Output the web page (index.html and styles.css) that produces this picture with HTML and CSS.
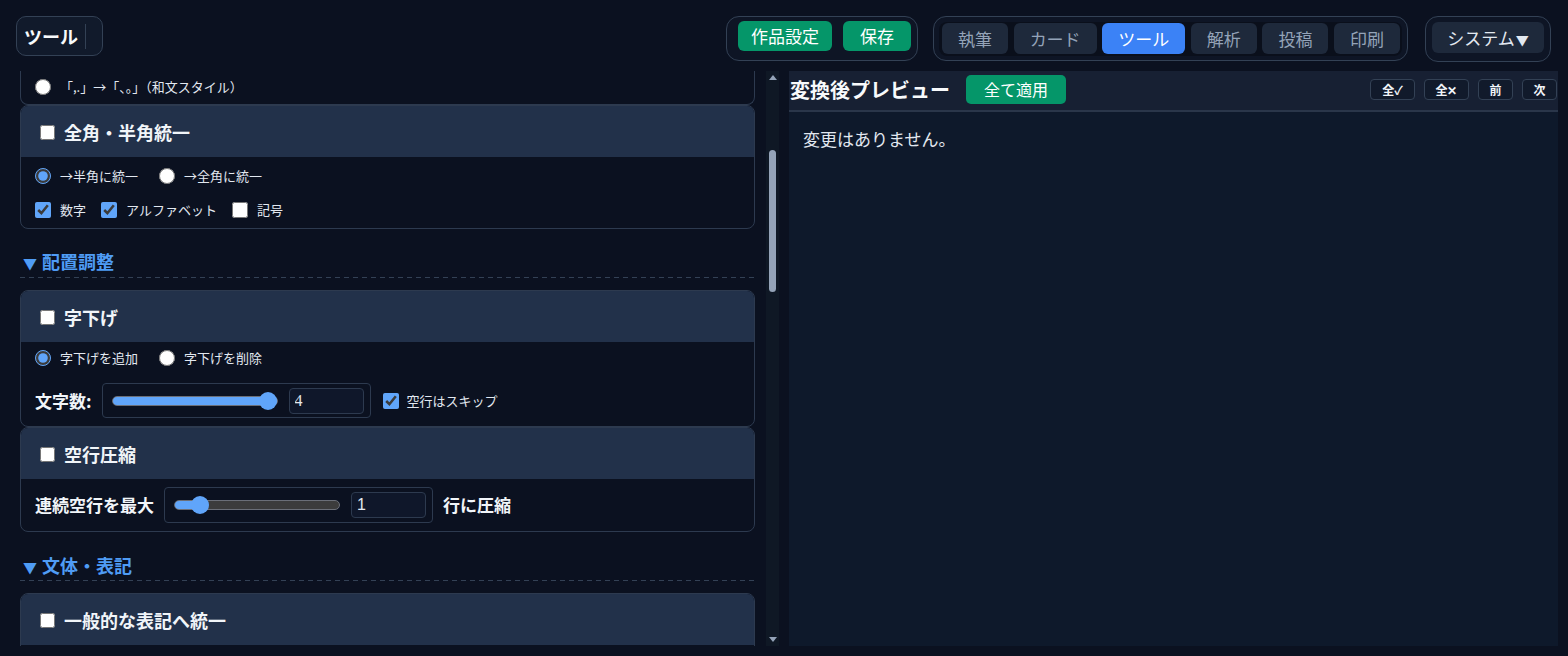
FILE: index.html
```html
<!DOCTYPE html>
<html lang="ja">
<head>
<meta charset="utf-8">
<title>ツール</title>
<link rel="stylesheet" href="styles.css">
</head>
<body>
<div class="app">
  <header class="topbar">
    <div class="title-box"><span class="title">ツール</span><span class="sep"></span></div>
    <div class="spacer"></div>
    <div class="group g-actions">
      <button class="btn green">作品設定</button>
      <button class="btn green save">保存</button>
    </div>
    <div class="group g-tabs">
      <div class="tabs">
        <button class="tab">執筆</button>
        <button class="tab">カード</button>
        <button class="tab active">ツール</button>
        <button class="tab">解析</button>
        <button class="tab">投稿</button>
        <button class="tab">印刷</button>
      </div>
    </div>
    <div class="group g-sys">
      <button class="btn sys">システム<span class="caret">▼</span></button>
    </div>
  </header>

  <main class="main">
    <div class="left">
      <div class="card card-cut">
        <div class="card-body cut-body">
          <div class="row">
            <label class="opt"><input type="radio" name="punct" class="radio"><span>「,.」→「、。」（和文スタイル）</span></label>
          </div>
        </div>
      </div>

      <div class="card">
        <div class="card-head"><input type="checkbox" class="head-cb"><span class="card-title">全角・半角統一</span></div>
        <div class="card-body b-width">
          <div class="row radios">
            <label class="opt"><input type="radio" name="width" class="radio" checked><span>→半角に統一</span></label>
            <label class="opt"><input type="radio" name="width" class="radio"><span>→全角に統一</span></label>
          </div>
          <div class="row checks">
            <label class="opt"><input type="checkbox" class="cb" checked><span>数字</span></label>
            <label class="opt"><input type="checkbox" class="cb" checked><span>アルファベット</span></label>
            <label class="opt"><input type="checkbox" class="cb"><span>記号</span></label>
          </div>
        </div>
      </div>

      <h3 class="section s-first"><span class="tri">▼</span>配置調整</h3>

      <div class="card">
        <div class="card-head"><input type="checkbox" class="head-cb"><span class="card-title">字下げ</span></div>
        <div class="card-body b-indent">
          <div class="row radios">
            <label class="opt"><input type="radio" name="indent" class="radio" checked><span>字下げを追加</span></label>
            <label class="opt"><input type="radio" name="indent" class="radio"><span>字下げを削除</span></label>
          </div>
          <div class="row slider-row">
            <span class="field-label">文字数:</span>
            <div class="range-box">
              <input type="range" class="range" min="1" max="4" value="4" style="--fill:100%">
              <input type="text" class="num num-serif" value="4">
            </div>
            <label class="opt skip"><input type="checkbox" class="cb" checked><span>空行はスキップ</span></label>
          </div>
        </div>
      </div>

      <div class="card">
        <div class="card-head"><input type="checkbox" class="head-cb"><span class="card-title">空行圧縮</span></div>
        <div class="card-body b-blank">
          <div class="row slider-row">
            <span class="field-label">連続空行を最大</span>
            <div class="range-box tall">
              <input type="range" class="range" min="0" max="9" value="1" style="--fill:16%">
              <input type="text" class="num" value="1">
            </div>
            <span class="field-label">行に圧縮</span>
          </div>
        </div>
      </div>

      <h3 class="section s-second"><span class="tri">▼</span>文体・表記</h3>

      <div class="card">
        <div class="card-head"><input type="checkbox" class="head-cb"><span class="card-title">一般的な表記へ統一</span></div>
        <div class="card-body b-width">
          <div class="row"></div>
        </div>
      </div>
    </div>

    <div class="scrollbar">
      <span class="arrow up"></span>
      <div class="track"><div class="thumb"></div></div>
      <span class="arrow down"></span>
    </div>

    <section class="preview">
      <div class="preview-head">
        <span class="preview-title">変換後プレビュー</span>
        <button class="btn green apply">全て適用</button>
        <div class="spacer"></div>
        <div class="mini-group">
          <button class="mini wide">全✓</button>
          <button class="mini wide">全✕</button>
          <button class="mini">前</button>
          <button class="mini">次</button>
        </div>
      </div>
      <div class="preview-body">
        <p class="empty">変更はありません。</p>
      </div>
    </section>
  </main>
</div>
</body>
</html>
```

FILE: styles.css
```css
* { box-sizing: border-box; }

html, body {
  margin: 0;
  padding: 0;
  background: #0b1120;
  color: #e2e8f0;
  font-family: "Noto Sans CJK JP", "Noto Sans", sans-serif;
}

.app {
  width: 1568px;
  height: 656px;
  overflow: hidden;
}

button {
  font-family: inherit;
  border: none;
  cursor: pointer;
  margin: 0;
}

/* ---------- top bar ---------- */
.topbar {
  height: 71px;
  display: flex;
  align-items: flex-start;
  padding: 16px 17px 0 16px;
}

.spacer { flex: 1; }

.title-box {
  height: 40px;
  display: flex;
  align-items: center;
  gap: 7px;
  padding: 0 16px 0 7px;
  background: #111a2b;
  border: 1px solid #334155;
  border-radius: 10px;
}

.title {
  font-size: 18px;
  font-weight: 700;
  line-height: 24px;
  color: #f8fafc;
}

.sep {
  width: 1px;
  height: 25px;
  background: #334155;
}

.group {
  display: flex;
  border: 1px solid #334155;
  border-radius: 13px;
  background: #0e1525;
}

.g-actions {
  gap: 11px;
  padding: 4px 6px 9px 11px;
}

.g-tabs {
  margin-left: 15px;
  padding: 5px 5px 4px 5px;
}

.g-sys {
  margin-left: 17px;
  padding: 5px 6px 8px 6px;
}

.btn {
  height: 30px;
  border-radius: 6px;
  font-size: 17px;
  line-height: 30px;
  color: #ffffff;
  padding: 0 13px;
}

.green { background: #059669; }

.save { min-width: 68px; }

.tabs {
  display: flex;
  gap: 5.6px;
  padding: 1px 2px 2px 3px;
  background: #0a0f1b;
  border-radius: 8px;
}

.tab {
  height: 31px;
  padding: 0 16px;
  border-radius: 6px;
  background: #1e293b;
  color: #94a3b8;
  font-size: 17px;
  line-height: 31px;
}

.tab.active {
  background: #3b82f6;
  color: #ffffff;
}

.sys {
  height: 31px;
  width: 112px;
  padding: 0;
  background: #1e293b;
  color: #e2e8f0;
  font-size: 17px;
  line-height: 31px;
}

.caret {
  font-size: 13px;
  margin-left: 1px;
}

/* ---------- main ---------- */
.main {
  height: 575px;
  display: flex;
  padding-left: 20px;
}

.left {
  width: 735px;
  height: 575px;
  overflow: hidden;
  display: flex;
  flex-direction: column;
  flex-shrink: 0;
}

.card {
  border: 1px solid #2d3a4f;
  border-radius: 8px;
  overflow: hidden;
  background: #0b1120;
  flex-shrink: 0;
}

.card-cut {
  border-top: none;
  border-radius: 0 0 8px 8px;
}

.card-head {
  height: 51px;
  display: flex;
  align-items: center;
  padding-left: 19px;
  background: #22314a;
}

.head-cb {
  width: 15px;
  height: 15px;
  margin: 1px 9px 0 0;
}

.card-title {
  font-size: 18px;
  font-weight: 700;
  line-height: 24px;
  color: #f1f5f9;
}

.card-body {
  display: flex;
  flex-direction: column;
  padding: 0 14px;
}

.cut-body { padding-top: 4px; padding-bottom: 5px; }
.b-width { padding-top: 7px; padding-bottom: 6px; gap: 10px; }
.b-indent { padding-top: 4px; padding-bottom: 8px; gap: 13px; }
.b-blank { padding-top: 8px; padding-bottom: 8px; }

.row {
  display: flex;
  align-items: center;
  min-height: 24px;
}

.radios { gap: 21px; }
.checks { gap: 15px; }
.slider-row { gap: 10px; }

.opt {
  display: flex;
  align-items: center;
  gap: 9px;
  font-size: 13px;
  line-height: 24px;
  color: #e2e8f0;
}

.radio, .cb {
  width: 16px;
  height: 16px;
  margin: 0;
  accent-color: #60a5fa;
}

.skip { margin-left: 2px; gap: 8px; }

.field-label {
  font-size: 17px;
  font-weight: 700;
  line-height: 24px;
  color: #f1f5f9;
}

.range-box {
  height: 35px;
  display: flex;
  align-items: center;
  gap: 11px;
  padding: 0 6px 0 9px;
  border: 1px solid #2d3a4f;
  border-radius: 4px;
}

.range-box.tall { height: 36px; }

.range {
  -webkit-appearance: none;
  appearance: none;
  width: 166px;
  height: 10px;
  margin: 0;
  border-radius: 5px;
  border: 1px solid #6b6f78;
  background: linear-gradient(to right, #60a5fa var(--fill), #3c3c3c var(--fill));
}

.range::-webkit-slider-thumb {
  -webkit-appearance: none;
  appearance: none;
  width: 18px;
  height: 18px;
  border-radius: 50%;
  background: #60a5fa;
  border: none;
}

.num {
  width: 75px;
  height: 26px;
  margin: 0;
  padding: 0 5px;
  border: 1px solid #2d3a4f;
  border-radius: 4px;
  background: #0f172a;
  color: #e2e8f0;
  font-size: 16px;
  font-family: "Liberation Sans", sans-serif;
  outline: none;
}

.num-serif { font-family: "Liberation Serif", serif; }

.section {
  margin: 0;
  height: 28px;
  font-size: 18px;
  font-weight: 700;
  line-height: 24px;
  color: #4f9cf5;
  flex-shrink: 0;
}

.tri {
  font-size: 14px;
  line-height: 0;
  margin: 0 5px 0 3px;
}

.section::after {
  content: "";
  display: block;
  height: 1px;
  background: repeating-linear-gradient(to right, #334155 0 5px, transparent 5px 9px);
}

.s-first { margin-top: 20px; margin-bottom: 12px; height: 29px; }
.s-first::after { margin-top: 4px; }
.s-second { margin-top: 21px; margin-bottom: 12px; height: 28px; }
.s-second::after { margin-top: 3px; }

/* ---------- scrollbar ---------- */
.scrollbar {
  width: 13px;
  height: 575px;
  margin-left: 11px;
  background: #0f1825;
  display: flex;
  flex-direction: column;
  align-items: center;
  flex-shrink: 0;
}

.arrow {
  width: 0;
  height: 0;
  border-left: 4px solid transparent;
  border-right: 4px solid transparent;
  flex-shrink: 0;
}

.arrow.up {
  margin-top: 4px;
  border-bottom: 5px solid #94a3b8;
}

.arrow.down {
  margin-bottom: 4px;
  border-top: 5px solid #94a3b8;
}

.track {
  flex: 1;
  width: 100%;
  display: flex;
  justify-content: center;
}

.thumb {
  width: 7px;
  height: 142px;
  margin-top: 70px;
  border-radius: 4px;
  background: #94a3b8;
}

/* ---------- preview ---------- */
.preview {
  width: 769px;
  height: 575px;
  margin-left: 10px;
  display: flex;
  flex-direction: column;
  flex-shrink: 0;
}

.preview-head {
  height: 41px;
  display: flex;
  align-items: center;
  padding: 0 1px 2px 1px;
  background: #172033;
  border-bottom: 2px solid #2a364a;
}

.preview-title {
  font-size: 20px;
  font-weight: 700;
  line-height: 28px;
  color: #f8fafc;
}

.apply {
  margin-left: 16px;
  height: 29px;
  line-height: 29px;
  font-size: 16px;
  padding: 0 18px;
  border-radius: 5px;
}

.mini-group {
  display: flex;
  gap: 9px;
}

.mini {
  width: 35px;
  height: 21px;
  padding: 0;
  text-align: center;
  border: 1px solid #334155;
  border-radius: 4px;
  background: #111a2b;
  color: #f1f5f9;
  font-size: 12px;
  font-weight: 700;
  line-height: 19px;
}

.mini.wide { width: 45px; }

.preview-body {
  flex: 1;
  background: #0e192b;
  padding: 14px;
}

.empty {
  margin: 0;
  font-size: 17px;
  line-height: 26px;
  color: #e2e8f0;
}
```
